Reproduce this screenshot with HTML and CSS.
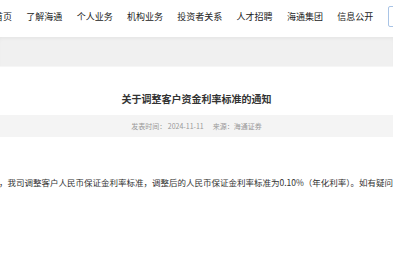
FILE: index.html
```html
<!DOCTYPE html>
<html lang="zh-CN">
<head>
  <meta charset="UTF-8" />
  <meta name="viewport" content="width=device-width, initial-scale=1.0"/>
  <title>关于调整客户资金利率标准的通知</title>
  <link rel="stylesheet" href="styles.css">
</head>
<body>
  <div class="header">
    <ul class="nav">
      <li>首页</li>
      <li>了解海通</li>
      <li>个人业务</li>
      <li>机构业务</li>
      <li>投资者关系</li>
      <li>人才招聘</li>
      <li>海通集团</li>
      <li>信息公开</li>
      <li class="search"><input type="text" /></li>
    </ul>
  </div>

  <div class="crumbs"></div>

  <div class="article">
    <h1>关于调整客户资金利率标准的通知</h1>
    <div class="meta">
      <span>发表时间： 2024-11-11</span>
      <span class="source">来源：海通证券</span>
    </div>
    <p class="content">，我司调整客户人民币保证金利率标准，调整后的人民币保证金利率标准为0.10%（年化利率）。如有疑问</p>
  </div>
</body>
</html>
```

FILE: styles.css
```css
* {
  box-sizing: border-box;
}

body {
  margin: 0;
  font-family: "Noto Sans CJK SC", "Noto Sans", sans-serif;
  color: #333;
  background: #fff;
  overflow: hidden;
}

.header {
  height: 37px;
  background: #fff;
}

.nav {
  list-style: none;
  margin: 0 0 0 -6px;
  padding: 0 0 4px;
  height: 37px;
  display: flex;
  align-items: center;
  gap: 14.3px;
  white-space: nowrap;
  font-size: 9px;
  color: #222;
}

.nav .search input {
  width: 120px;
  height: 21px;
  border: 1px solid #a9c4e6;
  border-radius: 2px;
  padding: 0 6px;
  font-size: 9px;
}

.crumbs {
  height: 30px;
  background: #f0f0f0;
  box-shadow: inset 0 3px 4px -2px rgba(0, 0, 0, 0.06);
  border-bottom: 1px solid #f6f6f6;
}

.article {
  padding-top: 25px;
}

h1 {
  margin: 0;
  text-align: center;
  font-size: 10px;
  line-height: 14px;
  font-weight: bold;
  color: #333;
}

.meta {
  margin-top: 9px;
  height: 22px;
  background: #f4f4f4;
  display: flex;
  justify-content: center;
  align-items: center;
  gap: 9px;
  font-size: 7px;
  color: #999;
}

.content {
  margin: 38px 0 0 -1px;
  font-size: 8.5px;
  line-height: 14px;
  color: #333;
  white-space: nowrap;
}
```
